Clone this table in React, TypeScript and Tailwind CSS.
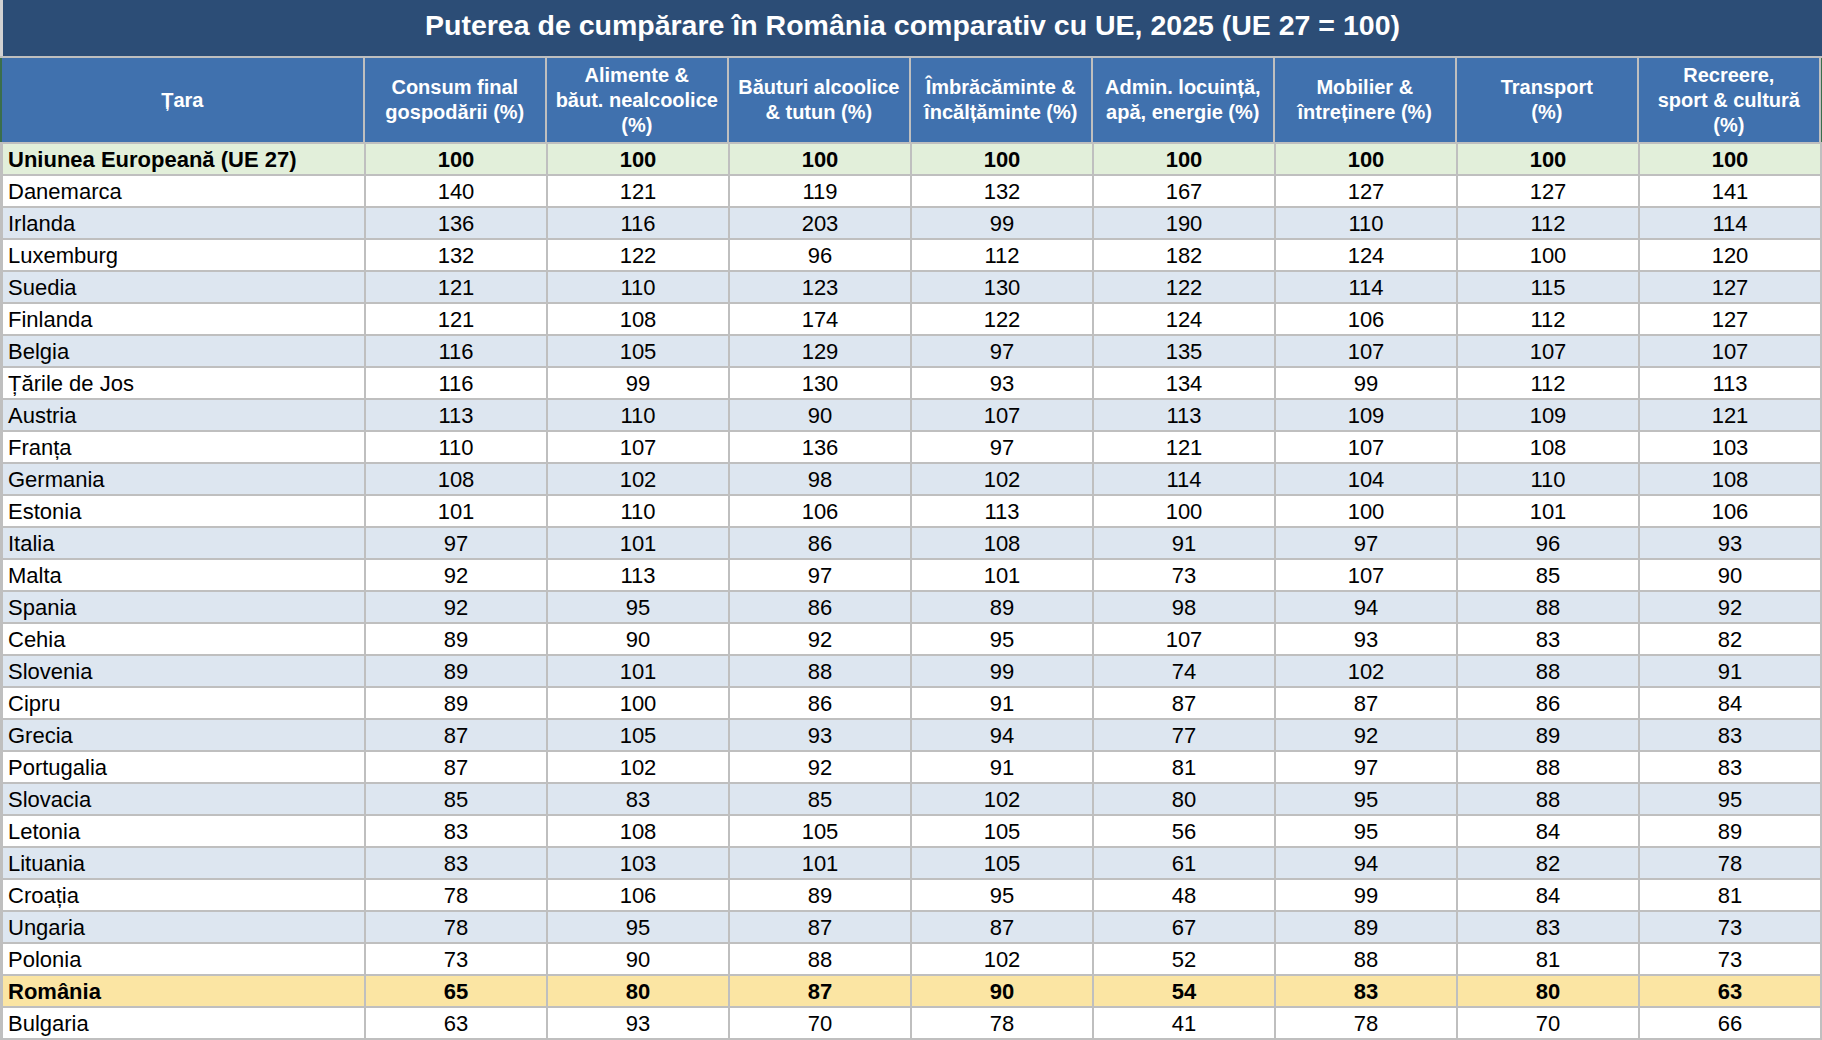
const headers = [
  ['Țara'],
  ['Consum final', 'gospodării (%)'],
  ['Alimente &', 'băut. nealcoolice', '(%)'],
  ['Băuturi alcoolice', '& tutun (%)'],
  ['Îmbrăcăminte &', 'încălțăminte (%)'],
  ['Admin. locuință,', 'apă, energie (%)'],
  ['Mobilier &', 'întreținere (%)'],
  ['Transport', '(%)'],
  ['Recreere,', 'sport & cultură', '(%)'],
];

const rows: [string, number[]][] = [
  ['Danemarca', [140, 121, 119, 132, 167, 127, 127, 141]],
  ['Irlanda', [136, 116, 203, 99, 190, 110, 112, 114]],
  ['Luxemburg', [132, 122, 96, 112, 182, 124, 100, 120]],
  ['Suedia', [121, 110, 123, 130, 122, 114, 115, 127]],
  ['Finlanda', [121, 108, 174, 122, 124, 106, 112, 127]],
  ['Belgia', [116, 105, 129, 97, 135, 107, 107, 107]],
  ['Țările de Jos', [116, 99, 130, 93, 134, 99, 112, 113]],
  ['Austria', [113, 110, 90, 107, 113, 109, 109, 121]],
  ['Franța', [110, 107, 136, 97, 121, 107, 108, 103]],
  ['Germania', [108, 102, 98, 102, 114, 104, 110, 108]],
  ['Estonia', [101, 110, 106, 113, 100, 100, 101, 106]],
  ['Italia', [97, 101, 86, 108, 91, 97, 96, 93]],
  ['Malta', [92, 113, 97, 101, 73, 107, 85, 90]],
  ['Spania', [92, 95, 86, 89, 98, 94, 88, 92]],
  ['Cehia', [89, 90, 92, 95, 107, 93, 83, 82]],
  ['Slovenia', [89, 101, 88, 99, 74, 102, 88, 91]],
  ['Cipru', [89, 100, 86, 91, 87, 87, 86, 84]],
  ['Grecia', [87, 105, 93, 94, 77, 92, 89, 83]],
  ['Portugalia', [87, 102, 92, 91, 81, 97, 88, 83]],
  ['Slovacia', [85, 83, 85, 102, 80, 95, 88, 95]],
  ['Letonia', [83, 108, 105, 105, 56, 95, 84, 89]],
  ['Lituania', [83, 103, 101, 105, 61, 94, 82, 78]],
  ['Croația', [78, 106, 89, 95, 48, 99, 84, 81]],
  ['Ungaria', [78, 95, 87, 87, 67, 89, 83, 73]],
  ['Polonia', [73, 90, 88, 102, 52, 88, 81, 73]],
  ['România', [65, 80, 87, 90, 54, 83, 80, 63]],
  ['Bulgaria', [63, 93, 70, 78, 41, 78, 70, 66]],
];

const grid = 'grid grid-cols-[361px_repeat(8,180px)] gap-x-[2px]';

function DataRow({ name, values, bg, bold }: { name: string; values: number[]; bg: string; bold?: boolean }) {
  return (
    <div className={`${grid} h-[30px] ${bold ? 'font-bold' : ''}`}>
      <div className={`${bg} flex items-center pl-[5px] pt-[2px]`}>{name}</div>
      {values.map((v, i) => (
        <div key={i} className={`${bg} flex items-center justify-center pt-[2px]`}>
          {v}
        </div>
      ))}
    </div>
  );
}

export default function App() {
  return (
    <div
      className="w-[1822px] h-[1040px] bg-[#bfbfbf] overflow-hidden text-black text-[22px] leading-none"
      style={{ fontFamily: '"Liberation Sans", Arial, sans-serif' }}
    >
      {/* title */}
      <div className="flex h-[56px]">
        <div className="w-[3px] bg-[#d2d2d2]" />
        <div className="flex-1 bg-[#2c4d76] flex items-center justify-center text-white font-bold text-[28.5px] pb-[5px]">
          Puterea de cumpărare în România comparativ cu UE, 2025 (UE 27 = 100)
        </div>
      </div>

      {/* header */}
      <div className="flex h-[84px] mt-[2px]">
        <div className="w-[3px] bg-[#3a6e4c]" />
        <div className={grid}>
          {headers.map((lines, i) => (
            <div
              key={i}
              className="bg-[#4071ae] flex flex-col items-center justify-center text-white font-bold text-[20px] leading-[25px] text-center"
            >
              {lines.map((l, j) => (
                <span key={j}>{l}</span>
              ))}
            </div>
          ))}
        </div>
        <div className="w-[2px] ml-[2px] bg-[#3a6e4c]" />
      </div>

      {/* body */}
      <div className="flex flex-col gap-y-[2px] mt-[2px] pl-[3px]">
        <DataRow name="Uniunea Europeană (UE 27)" values={[100, 100, 100, 100, 100, 100, 100, 100]} bg="bg-[#e2efda]" bold />
        {rows.map(([name, values], i) => {
          const ro = name === 'România';
          const bg = ro ? 'bg-[#fbe5a3]' : i % 2 === 1 ? 'bg-[#dde6f0]' : 'bg-white';
          return <DataRow key={name} name={name} values={values} bg={bg} bold={ro} />;
        })}
      </div>
    </div>
  );
}
